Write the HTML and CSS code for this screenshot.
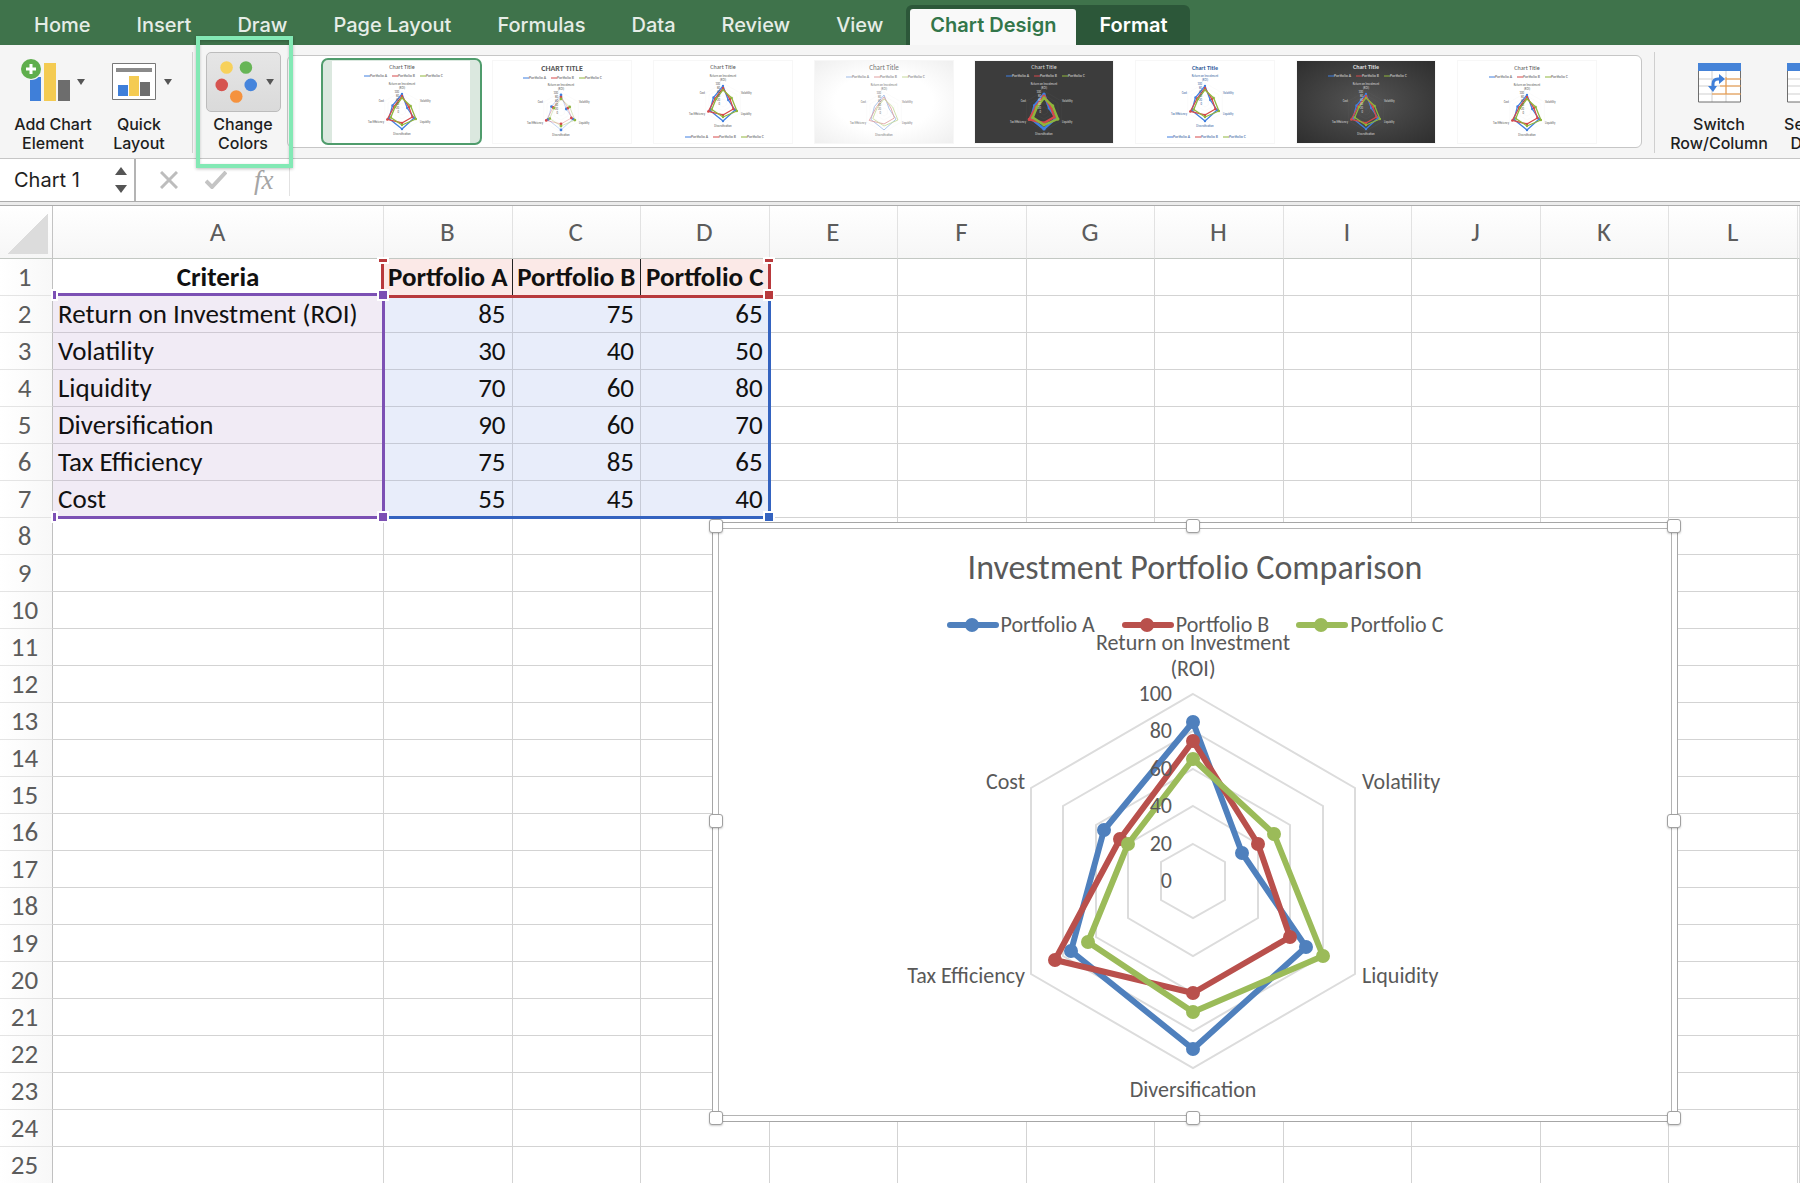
FILE: index.html
```html
<!DOCTYPE html>
<html lang="en">
<head>
<meta charset="utf-8">
<meta name="viewport" content="width=device-width, initial-scale=1">
<title>Investment Portfolio Comparison</title>
<link rel="stylesheet" href="styles.css">
</head>
<body>
<svg class="defs" width="0" height="0" aria-hidden="true">
  <defs>
    <g id="radar-grid" class="radar-grid">
      <polygon points="0,-37 32,-19 32,19 0,37 -32,19 -32,-19"/>
      <polygon points="0,-75 65,-37 65,37 0,75 -65,37 -65,-37"/>
      <polygon points="0,-112 97,-56 97,56 0,112 -97,56 -97,-56"/>
      <polygon points="0,-150 130,-75 130,75 0,150 -130,75 -130,-75"/>
      <polygon points="0,-187 162,-93 162,93 0,187 -162,93 -162,-93"/>
    </g>
    <g id="radar-series" class="radar-series">
      <g class="series-a"><polygon points="0,-159 49,-28 113,66 0,168 -122,70 -89,-51"/><path class="dots" d="M0-159h0M49-28h0M113 66h0M0 168h0M-122 70h0M-89-51h0"/></g>
      <g class="series-b"><polygon points="0,-140 65,-37 97,56 0,112 -138,79 -73,-42"/><path class="dots" d="M0-140h0M65-37h0M97 56h0M0 112h0M-138 79h0M-73-42h0"/></g>
      <g class="series-c"><polygon points="0,-122 81,-47 130,75 0,131 -105,61 -65,-37"/><path class="dots" d="M0-122h0M81-47h0M130 75h0M0 131h0M-105 61h0M-65-37h0"/></g>
    </g>
    <g id="mini-plot">
      <g transform="scale(.107)"><use href="#radar-grid"/><use href="#radar-series"/></g>
      <g class="mini-label">
        <text x="0" y="-26" text-anchor="middle">Return on Investment</text>
        <text x="0" y="-22" text-anchor="middle">(ROI)</text>
        <text x="18" y="-9">Volatility</text>
        <text x="18" y="12">Liquidity</text>
        <text x="0" y="24" text-anchor="middle">Diversification</text>
        <text x="-18" y="12" text-anchor="end">Tax Efficiency</text>
        <text x="-18" y="-9" text-anchor="end">Cost</text>
        <text x="-3" y="-18" text-anchor="end">100</text>
        <text x="-3" y="-14" text-anchor="end">80</text>
        <text x="-3" y="-10" text-anchor="end">60</text>
        <text x="-3" y="-6" text-anchor="end">40</text>
        <text x="-3" y="-2" text-anchor="end">20</text>
        <text x="-3" y="2" text-anchor="end">0</text>
      </g>
    </g>
    <g id="mini-legend" class="mini-legend">
      <path class="series-a" d="M32 0h6M35 0h0"/><text x="38" y="1">Portfolio A</text>
      <path class="series-b" d="M60 0h6M63 0h0"/><text x="66" y="1">Portfolio B</text>
      <path class="series-c" d="M88 0h6M91 0h0"/><text x="94" y="1">Portfolio C</text>
    </g>
    <g id="sheet-icon">
      <path d="M16 17h43v33H16z" fill="#fff"/>
      <path d="M30 19v31M44 19v31M16 27h43M16 34h43M16 42h43" stroke="#cfcfcf" fill="none"/>
      <path d="M16.500 18v32h42V18" stroke="#6e6e6e" fill="none"/>
      <path d="M16 11h43v8H16z" fill="#4583d8"/>
    </g>
  </defs>
</svg>

<div class="app">
  <nav class="tabs" aria-label="Ribbon tabs">
    <a class="tab" href="#home">Home</a>
    <a class="tab" href="#insert">Insert</a>
    <a class="tab" href="#draw">Draw</a>
    <a class="tab" href="#page-layout">Page Layout</a>
    <a class="tab" href="#formulas">Formulas</a>
    <a class="tab" href="#data">Data</a>
    <a class="tab" href="#review">Review</a>
    <a class="tab" href="#view">View</a>
    <div class="context-tabs">
      <a class="tab tab-active" href="#chart-design" aria-current="page">Chart Design</a>
      <a class="tab tab-context" href="#format">Format</a>
    </div>
  </nav>

  <div class="ribbon">
    <button class="tool tool-add" type="button">
      <svg class="tool-icon" width="75" height="60" viewBox="0 0 75 60" aria-hidden="true">
        <path d="M14 25h11v24H14z" fill="#3f7fd9"/><path d="M28 11h12v38H28z" fill="#f4cb52"/><path d="M42 28h12v21H42z" fill="#6d6d6d"/>
        <circle cx="15" cy="17" r="11" fill="#f5f5f5"/><circle cx="15" cy="17" r="10" fill="#5fae4d"/>
        <path d="M15 12v10M10 17h10" stroke="#fff" stroke-width="3"/>
        <path d="M61 27h8l-4 6z" fill="#555"/>
      </svg>
      <span>Add Chart<br>Element</span>
    </button>
    <button class="tool tool-quick" type="button">
      <svg class="tool-icon" width="75" height="60" viewBox="0 0 75 60" aria-hidden="true">
        <path d="M10.500 11.500h43v36h-43z" fill="#fff" stroke="#777"/>
        <path d="M14 16h36v4H14z" fill="#8a8a8a"/>
        <path d="M16 33h10v11H16z" fill="#3f7fd9"/><path d="M27 24h10v20H27z" fill="#f4cb52"/><path d="M38 30h10v14H38z" fill="#6d6d6d"/>
        <path d="M62 27h8l-4 6z" fill="#555"/>
      </svg>
      <span>Quick<br>Layout</span>
    </button>
    <div class="divider divider-left"></div>
    <div class="callout">
      <button class="tool tool-colors" type="button">
        <svg class="tool-icon tool-icon-pressed" width="75" height="60" viewBox="0 0 75 60" aria-hidden="true">
          <circle cx="20" cy="15" r="6.500" fill="#f7d15c"/><circle cx="40" cy="15" r="6.500" fill="#67b556"/>
          <circle cx="15" cy="33" r="6.500" fill="#d65450"/><circle cx="45" cy="33" r="6.500" fill="#4685dc"/>
          <circle cx="30" cy="45" r="6.500" fill="#f5923e"/>
          <path d="M61 27h8l-4 6z" fill="#555"/>
        </svg>
        <span>Change<br>Colors</span>
      </button>
    </div>
    <div class="gallery" role="group" aria-label="Chart styles">
      <button class="style style-selected" type="button" aria-label="Style 1">
        <svg class="thumb thumb-1" viewBox="0 0 138 82"><text class="mini-title" x="70" y="8">Chart Title</text><use href="#mini-legend" y="15"/><use href="#mini-plot" x="70" y="50"/></svg>
      </button>
      <button class="style" type="button" aria-label="Style 2">
        <svg class="thumb thumb-2" viewBox="0 0 138 82"><text class="mini-title" x="69" y="10">CHART TITLE</text><use href="#mini-legend" x="-2" y="17"/><use href="#mini-plot" x="68" y="51"/></svg>
      </button>
      <button class="style" type="button" aria-label="Style 3">
        <svg class="thumb thumb-3" viewBox="0 0 138 82"><text class="mini-title" x="69" y="8">Chart Title</text><use href="#mini-legend" x="-1" y="76"/><use href="#mini-plot" x="69" y="42"/></svg>
      </button>
      <button class="style" type="button" aria-label="Style 4">
        <svg class="thumb thumb-4" viewBox="0 0 138 82"><text class="mini-title" x="69" y="9">Chart Title</text><use href="#mini-legend" x="-1" y="16"/><use href="#mini-plot" x="69" y="51"/></svg>
      </button>
      <button class="style" type="button" aria-label="Style 5">
        <svg class="thumb thumb-5" viewBox="0 0 138 82"><text class="mini-title" x="69" y="8">Chart Title</text><use href="#mini-legend" x="-1" y="15"/><use href="#mini-plot" x="69" y="50"/></svg>
      </button>
      <button class="style" type="button" aria-label="Style 6">
        <svg class="thumb thumb-6" viewBox="0 0 138 82"><text class="mini-title" x="69" y="9">Chart Title</text><use href="#mini-legend" x="-1" y="76"/><use href="#mini-plot" x="69" y="42"/></svg>
      </button>
      <button class="style" type="button" aria-label="Style 7">
        <svg class="thumb thumb-7" viewBox="0 0 138 82"><text class="mini-title" x="69" y="8">Chart Title</text><use href="#mini-legend" x="-1" y="15"/><use href="#mini-plot" x="69" y="50"/></svg>
      </button>
      <button class="style" type="button" aria-label="Style 8">
        <svg class="thumb thumb-8" viewBox="0 0 138 82"><text class="mini-title" x="69" y="9">Chart Title</text><use href="#mini-legend" x="-1" y="16"/><use href="#mini-plot" x="69" y="51"/></svg>
      </button>
    </div>
    <div class="data-tools">
      <div class="divider"></div>
      <button class="tool tool-switch" type="button">
        <svg class="tool-icon" width="75" height="60" viewBox="0 0 75 60" aria-hidden="true">
          <use href="#sheet-icon"/>
          <path d="M44 25v17M44 27h15M38 34h21M30 42h29" stroke="#f0983f" fill="none"/>
          <path d="M31 36v-4q0-5 5-5h2" stroke="#3f7fd9" stroke-width="3" fill="none"/>
          <path d="M37 22l6 5-6 5zM26 34h9l-4 6z" fill="#3f7fd9"/>
        </svg>
        <span>Switch<br>Row/Column</span>
      </button>
      <button class="tool tool-select" type="button">
        <svg class="tool-icon" width="75" height="60" viewBox="0 0 75 60" aria-hidden="true">
          <use href="#sheet-icon"/>
          <path d="M30.500 26.500h28v16h-28z" stroke="#f0983f" fill="none"/>
        </svg>
        <span>Select<br>Data</span>
      </button>
    </div>
  </div>

  <div class="formula-bar">
    <div class="name-box">
      <input class="name-input" type="text" value="Chart 1" aria-label="Name box">
      <div class="name-steps">
        <button class="icon-button" type="button" aria-label="Previous name"><svg width="12" height="8" viewBox="0 0 12 8"><path d="M6 0l6 8H0z" fill="#555"/></svg></button>
        <button class="icon-button" type="button" aria-label="Next name"><svg width="12" height="8" viewBox="0 0 12 8"><path d="M0 0h12L6 8z" fill="#555"/></svg></button>
      </div>
    </div>
    <div class="formula-actions">
      <button class="icon-button" type="button" aria-label="Cancel"><svg width="18" height="18" viewBox="0 0 18 18"><path d="M1 1l16 16M17 1L1 17" stroke="#bdbdbd" stroke-width="3" fill="none"/></svg></button>
      <button class="icon-button" type="button" aria-label="Enter"><svg width="22" height="18" viewBox="0 0 22 18"><path d="M1 10l6 6L21 1" stroke="#c4c4c4" stroke-width="4" fill="none"/></svg></button>
      <button class="icon-button fx" type="button" aria-label="Insert function">fx</button>
    </div>
    <input class="formula-input" type="text" aria-label="Formula">
  </div>

  <main class="sheet">
    <table class="grid" id="grid">
      <colgroup><col class="col-rows"><col class="col-a"><col><col><col><col><col><col><col><col><col><col><col><col class="col-edge"></colgroup>
      <thead><tr><th class="corner" aria-label="Select all"></th></tr></thead>
      <tbody></tbody>
    </table>

    <section class="chart" aria-label="Investment Portfolio Comparison">
      <div class="chart-area">
        <h1 class="chart-title">Investment Portfolio Comparison</h1>
        <ul class="legend">
          <li class="legend-item series-a"><svg width="52" height="16" viewBox="0 0 52 16"><path class="key" d="M3 8h46"/><circle class="key-dot" cx="25" cy="8" r="7"/></svg>Portfolio A</li>
          <li class="legend-item series-b"><svg width="52" height="16" viewBox="0 0 52 16"><path class="key" d="M3 8h46"/><circle class="key-dot" cx="25" cy="8" r="7"/></svg>Portfolio B</li>
          <li class="legend-item series-c"><svg width="52" height="16" viewBox="0 0 52 16"><path class="key" d="M3 8h46"/><circle class="key-dot" cx="25" cy="8" r="7"/></svg>Portfolio C</li>
        </ul>
        <svg class="plot" width="700" height="490" viewBox="-348 -260 700 490" role="img" aria-label="Radar chart of three portfolios">
          <use href="#radar-grid"/>
          <use href="#radar-series"/>
          <text x="0" y="-231" text-anchor="middle">Return on Investment</text>
          <text x="0" y="-205" text-anchor="middle">(ROI)</text>
          <text x="169" y="-92">Volatility</text>
          <text x="169" y="102">Liquidity</text>
          <text x="0" y="216" text-anchor="middle">Diversification</text>
          <text x="-168" y="102" text-anchor="end">Tax Efficiency</text>
          <text x="-168" y="-92" text-anchor="end">Cost</text>
          <text x="-21" y="-180" text-anchor="end">100</text>
          <text x="-21" y="-143" text-anchor="end">80</text>
          <text x="-21" y="-105" text-anchor="end">60</text>
          <text x="-21" y="-68" text-anchor="end">40</text>
          <text x="-21" y="-30" text-anchor="end">20</text>
          <text x="-21" y="7" text-anchor="end">0</text>
        </svg>
      </div>
      <i class="handle at-left at-top"></i><i class="handle at-center at-top"></i><i class="handle at-right at-top"></i>
      <i class="handle at-left at-middle"></i><i class="handle at-right at-middle"></i>
      <i class="handle at-left at-bottom"></i><i class="handle at-center at-bottom"></i><i class="handle at-right at-bottom"></i>
    </section>
  </main>
</div>
<script src="script.js"></script>
</body>
</html>
```
FILE: styles.css
```css
:root {
  --green: #3f734b;
  --green-dark: #2c5739;
  --line: #d3d3d3;
  --ui: Inter, "Liberation Sans", sans-serif;
  --doc: Carlito, Calibri, Lato, sans-serif;
  --a: #4f80bd;
  --b: #b9504c;
  --c: #9bbb59;
  --lw: 6;
  --dot: 14;
  --web: #dcdcdc;
}

* { box-sizing: border-box; }

body {
  margin: 0;
  background: #fff;
  font-family: var(--ui);
  color: #1e1e1e;
}

button, input { font: inherit; color: inherit; }
button { padding: 0; border: 0; background: none; }

.defs { position: absolute; }

.app {
  display: flex;
  flex-direction: column;
  height: 100vh;
  overflow: hidden;
}

/* Tabs */
.tabs {
  display: flex;
  flex: none;
  align-items: flex-end;
  height: 45px;
  padding-left: 11px;
  background: var(--green);
}

.tab {
  padding: 0 23px;
  font-size: 20px;
  font-weight: 500;
  line-height: 40px;
  height: 40px;
  color: #e6ede7;
  text-decoration: none;
  white-space: nowrap;
}

.context-tabs {
  display: flex;
  align-items: flex-end;
  height: 40px;
  padding-left: 4px;
  border-radius: 6px 6px 0 0;
  background: var(--green-dark);
}

.tab-active {
  height: 36px;
  padding: 0 20px;
  border-radius: 3px 3px 0 0;
  background: #f9f9f9;
  color: #33764a;
  font-weight: 600;
  line-height: 32px;
}

.tab-context { color: #fff; font-weight: 600; }

/* Ribbon */
.ribbon {
  display: flex;
  flex: none;
  height: 114px;
  padding: 7px 0 0 7px;
  border-bottom: 1px solid #c6c6c6;
  background: #f5f5f5;
}

.tool {
  display: flex;
  flex: none;
  flex-direction: column;
  align-items: center;
  gap: 3px;
  height: 104px;
  font-size: 16px;
  font-weight: 500;
  line-height: 19px;
  text-align: center;
}

.tool-icon { flex: none; display: block; }
.tool-icon-pressed {
  border: 1px solid #bcbcbc;
  border-radius: 5px;
  background: linear-gradient(#e6e6e6, #dadada);
}
.tool-add { width: 92px; }
.tool-quick { width: 80px; }
.tool-colors { width: 84px; }
.tool-switch { width: 104px; margin-left: 12px; }
.tool-select { width: 74px; }

.divider { flex: none; width: 1px; height: 101px; background: #cfcfcf; }
.divider-left { margin: 0 8px 0 13px; }

.callout { position: relative; flex: none; }
.callout::after {
  content: "";
  position: absolute;
  z-index: 3;
  inset: -16px -8px -10px -5px;
  border: 4px solid #83e9b5;
  box-shadow: 0 1px 3px rgba(0, 0, 0, .25), inset 0 1px 3px rgba(0, 0, 0, .2);
  pointer-events: none;
}

.gallery {
  display: grid;
  flex: 1;
  grid-template-columns: repeat(8, 1fr);
  height: 93px;
  margin: 3px 0 0 2px;
  padding: 2px 34px 2px 33px;
  border: 1px solid #c6c6c6;
  border-radius: 6px;
  background: #fff;
}

.style {
  display: flex;
  align-items: center;
  justify-content: center;
  height: 87px;
  border: 2px solid transparent;
  border-radius: 7px;
}
.style-selected { border-color: #4f9c6c; background: #dbe8df; }

.thumb { display: block; width: 138px; height: 82px; background: #fff; outline: 1px solid #f7f7f7; font-family: var(--doc); fill: #555; --lw: 12; --dot: 22; --a: #3f7fe0; --b: #d5484a; --c: #8fb53c; --web: #ececec; }
.thumb-1 { outline: 0; }
.mini-title { font-size: 6px; text-anchor: middle; }
.mini-label { font-size: 3px; }
.mini-legend { font-size: 4px; }
.mini-legend path { stroke-width: 1; }
.thumb-2 { --lw: 3; --dot: 26; }
.thumb-2 .mini-title { font-size: 8px; font-weight: 700; }
.thumb-4 { background: radial-gradient(#fff 50%, #efefef); --lw: 8; --dot: 0; --a: #9fbbe6; --b: #e0a0a2; --c: #c6d99c; fill: #777; }
.thumb-4 .mini-title { font-size: 7px; }
.thumb-5 { background: #3c3c3c; fill: #ddd; --lw: 22; --dot: 30; --web: #555; }
.thumb-6 { fill: #2f5b9c; }
.thumb-7 { background: radial-gradient(#555, #2e2e2e); fill: #ddd; --web: #606060; }
.thumb-6 .mini-title, .thumb-7 .mini-title { font-weight: 700; }

.data-tools {
  display: flex;
  flex: none;
  width: 158px;
  padding-left: 12px;
  overflow: hidden;
}

/* Formula bar */
.formula-bar {
  display: flex;
  flex: none;
  align-items: center;
  height: 43px;
  border-bottom: 1px solid #acacac;
}

.name-box {
  display: flex;
  align-items: center;
  justify-content: space-between;
  align-self: stretch;
  width: 136px;
  padding: 0 7px 0 14px;
  border-right: 2px solid #b4b4b4;
}

.name-input {
  width: 92px;
  padding: 0;
  border: 0;
  outline: 0;
  background: none;
  font-size: 20px;
}

.name-steps { display: flex; flex-direction: column; gap: 10px; }
.icon-button { display: block; line-height: 0; }
.icon-button svg { display: block; }

.formula-actions {
  display: flex;
  align-items: center;
  gap: 27px;
  width: 154px;
  height: 32px;
  padding-left: 24px;
  border-right: 1px solid #e2e2e2;
}

.fx {
  color: #a5a5a5;
  font: italic 27px/28px "Liberation Serif", serif;
}

.formula-input { flex: 1; border: 0; outline: 0; background: none; }

/* Sheet */
.sheet {
  position: relative;
  flex: none;
  margin-top: 3px;
  border-top: 1px solid #acacac;
  box-shadow: 0 -3px #ececec;
}

.grid {
  width: 100%;
  border-spacing: 0;
  table-layout: fixed;
  font: 27px/32px var(--doc);
  color: #111;
}

.col-rows { width: 53px; }
.col-a { width: 331px; }
.col-edge { width: 2px; }

.grid th, .grid td {
  position: relative;
  height: 37px;
  padding: 0 6px 0 5px;
  border-right: 1px solid var(--line);
  border-bottom: 1px solid var(--line);
  text-align: left;
  white-space: nowrap;
}

.grid thead th {
  height: 53px;
  border-color: #e2e2e2;
  border-bottom-color: #c3c8c3;
  background: linear-gradient(#fff, #f6f6f6);
  color: #5c5c5c;
  font-weight: 400;
  text-align: center;
}

.grid .corner { border-right-color: #c3c3c3; }
.corner::after {
  content: "";
  position: absolute;
  right: 4px;
  bottom: 4px;
  width: 40px;
  height: 41px;
  background: linear-gradient(to bottom right, transparent 50%, #dcdcdc 50%);
}

.grid tbody .row-head {
  padding: 0;
  border-right-color: #c0c0c0;
  border-bottom-color: #e4e4e4;
  background: linear-gradient(to right, #fff, #f8f8f8);
  color: #5c5c5c;
  font-weight: 400;
  text-align: center;
}
.row-head span { display: inline-block; padding-right: 3px; }

.grid .head { padding: 0; font-weight: 700; text-align: center; }
.grid .head-series { background: #fbe9e7; }
.grid .head-split { border-right-color: #222; }
.grid .criteria { background: #f1ebf5; border-bottom-color: #cfc9d3; }
.grid .value { background: #e8edfa; border-color: #c6cad6; text-align: right; }

/* Source ranges of the selected chart */
.range { position: absolute; z-index: 1; pointer-events: none; }
.range-names { z-index: 2; top: 0; left: -3px; width: calc(300% + 7px); height: 39px; border: solid #b8393c; border-width: 0 3px 3px; }
.range-labels { z-index: 3; top: -3px; left: 0; width: calc(100% + 2px); height: 226px; border: solid #7c50b4; border-width: 3px 3px 3px 0; }
.range-values { top: 0; left: 0; width: calc(300% + 4px); height: 223px; border: solid #3463c0; border-width: 0 3px 3px 0; }
.grip { position: absolute; width: 8px; height: 8px; box-shadow: 0 0 0 2px #fff; }
.grip-half { width: 3px; }
.grip-flat { height: 3px; }
.range-names .grip { background: #b8393c; }
.range-labels .grip { background: #7c50b4; }
.range-values .grip { background: #3463c0; }
.grip-top { top: -5px; }
.grip-flat.grip-top { top: 0; }
.range-names .grip-bottom { bottom: -4px; }
.grip-bottom { bottom: -5px; }
.grip-right { right: -5px; }
.grip-left { left: -5px; }
.grip-half.grip-left { left: 0; }

/* Chart object */
.chart {
  position: absolute;
  z-index: 4;
  top: 316px;
  left: 712px;
  width: 966px;
  padding: 5px;
  border: 1px solid #a6a6a6;
  background: #fff;
}

.chart-area {
  display: flex;
  flex-direction: column;
  align-items: center;
  height: 588px;
  padding-top: 20px;
  border: 1px solid #b4b4b4;
  color: #595959;
  font: 22px/26px var(--doc);
}

.chart-title { margin: 0; font-size: 34px; font-weight: 400; line-height: 38px; }

.legend {
  display: flex;
  gap: 27px;
  margin: 25px 0 0;
  padding: 0;
  list-style: none;
}
.legend-item { display: flex; align-items: center; gap: 2px; }
.legend-item svg { display: block; }

.plot { display: block; flex: none; margin-top: -17px; fill: #595959; }

.series-a { stroke: var(--a); --s: var(--a); }
.series-b { stroke: var(--b); --s: var(--b); }
.series-c { stroke: var(--c); --s: var(--c); }
.key { stroke-width: 6; stroke-linecap: round; }
.key-dot { fill: var(--s); stroke: none; }
.radar-grid { fill: none; stroke: var(--web); stroke-width: 2; }
.radar-series { fill: none; stroke-width: var(--lw); stroke-linejoin: round; }
.dots { stroke-width: var(--dot); stroke-linecap: round; }

.handle {
  position: absolute;
  width: 14px;
  height: 14px;
  border: 1px solid #a0a0a0;
  border-radius: 3px;
  background: #fff;
  box-shadow: 0 1px 2px rgba(0, 0, 0, .2);
}
.at-left { left: -4px; }
.at-center { left: calc(50% - 9px); }
.at-right { right: -4px; }
.at-top { top: -4px; }
.at-middle { top: calc(50% - 8px); }
.at-bottom { bottom: -4px; }
```
FILE: script.js
```js
const columns = 'ABCDEFGHIJKL'.split('').concat('');
const rowCount = 25;
const data = [
  ['Criteria', 'Portfolio A', 'Portfolio B', 'Portfolio C'],
  ['Return on Investment (ROI)', 85, 75, 65],
  ['Volatility', 30, 40, 50],
  ['Liquidity', 70, 60, 80],
  ['Diversification', 90, 60, 70],
  ['Tax Efficiency', 75, 85, 65],
  ['Cost', 55, 45, 40],
];

const grid = document.getElementById('grid');

function cell(tag, className, text) {
  const el = document.createElement(tag);
  if (className) el.className = className;
  el.textContent = text;
  return el;
}

function addRange(target, className, grips) {
  const range = cell('div', `range ${className}`, '');
  grips.forEach((grip) => range.append(cell('i', `grip ${grip}`, '')));
  target.append(range);
}

columns.forEach((name) => grid.tHead.rows[0].append(cell('th', '', name)));

for (let r = 0; r < rowCount; r += 1) {
  const row = grid.tBodies[0].insertRow();
  const head = cell('th', 'row-head', '');
  head.append(cell('span', '', r + 1));
  row.append(head);
  columns.forEach((name, c) => {
    const value = data[r]?.[c];
    let className = '';
    if (value !== undefined) {
      if (r === 0) className = c === 0 ? 'head' : `head head-series${c < 3 ? ' head-split' : ''}`;
      else className = c === 0 ? 'criteria' : 'value';
    }
    row.append(cell('td', className, value ?? ''));
  });
}

const body = grid.tBodies[0].rows;
addRange(body[0].cells[2], 'range-names', ['grip-flat grip-top grip-left', 'grip-flat grip-top grip-right', 'grip-bottom grip-right']);
addRange(body[1].cells[2], 'range-values', ['grip-bottom grip-right']);
addRange(body[1].cells[1], 'range-labels', ['grip-half grip-top grip-left', 'grip-half grip-bottom grip-left', 'grip-top grip-right', 'grip-bottom grip-right']);
```
